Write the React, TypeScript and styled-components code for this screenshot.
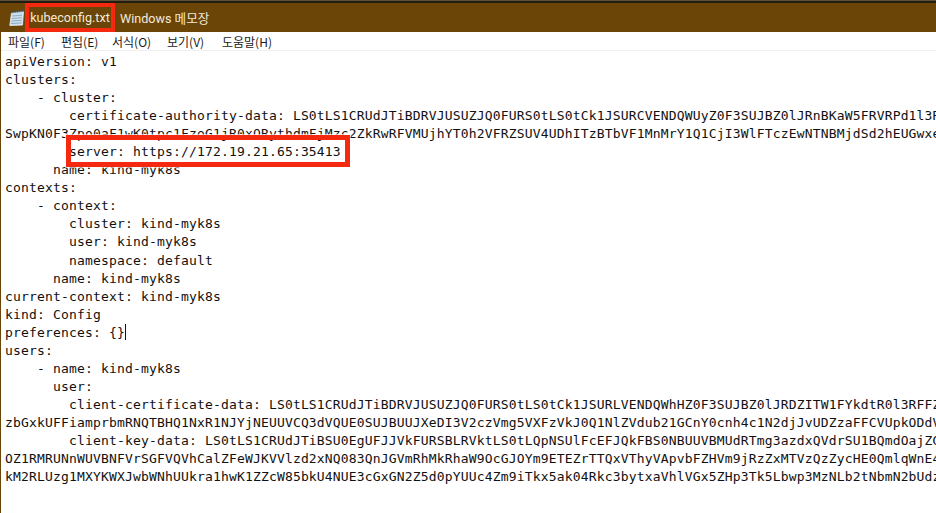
import React from "react";
import styled, { createGlobalStyle } from "styled-components";

const Global = createGlobalStyle`
  html, body { margin: 0; padding: 0; background: #fff; overflow: hidden; }
  #root { width: 936px; height: 513px; }
`;

const Win = styled.div`
  width: 936px;
  height: 513px;
  display: flex;
  flex-direction: column;
  overflow: hidden;
  background: #fff;
`;
const TopStrip = styled.div`
  height: 3px;
  flex: none;
  box-sizing: border-box;
  background: #231c10;
  border-top: 1px solid #5f5238;
`;
const TitleBar = styled.div`
  height: 29px;
  flex: none;
  display: flex;
  align-items: center;
  background: #6b4407;
  color: #f3ead9;
  font: 12.6px Roboto, "Noto Sans CJK KR", sans-serif;
  padding-left: 9px;
`;
const AppIcon = styled.svg`
  width: 16px;
  height: 18px;
  flex: none;
`;
const FileName = styled.span`
  border: 4px solid #f5290f;
  box-sizing: border-box;
  height: 29px;
  width: 90px;
  display: flex;
  align-items: center;
  justify-content: center;
  white-space: nowrap;
`;
const AppName = styled.span`
  margin-left: 5px;
  white-space: nowrap;
`;
const Body = styled.div`
  flex: 1;
  min-height: 0;
  display: flex;
  flex-direction: column;
  border-left: 1px solid #6b4407;
`;
const MenuBar = styled.div`
  height: 18px;
  flex: none;
  display: flex;
  align-items: center;
  background: #fff;
  border-bottom: 1px solid #f0f0f0;
  font: 12px "Noto Sans CJK KR", "Noto Sans", sans-serif;
  color: #1a1a1a;
`;
const MenuItem = styled.span<{ $w: number }>`
  width: ${(p) => p.$w}px;
  flex: none;
  padding-left: 7px;
  box-sizing: border-box;
  white-space: nowrap;
`;
const Editor = styled.div`
  position: relative;
  flex: 1;
  min-height: 0;
  overflow: hidden;
  padding: 2px 0 0 4px;
  font: 13px/18.05px "DejaVu Sans Mono", monospace;
  letter-spacing: 0.17px;
  color: #111;
`;
const Line = styled.div`
  white-space: pre;
`;
const Caret = styled.span`
  display: inline-block;
  width: 1px;
  height: 16px;
  background: #111;
  vertical-align: -3px;
`;
const Highlight = styled.div`
  position: absolute;
  left: 65px;
  top: 84px;
  width: 284px;
  height: 32px;
  box-sizing: border-box;
  border: 5px solid #f5290f;
  box-shadow: 0 0 0 1px rgba(255, 255, 255, 0.6);
`;

const menu: [string, number][] = [
  ["파일(F)", 53],
  ["편집(E)", 51],
  ["서식(O)", 55],
  ["보기(V)", 55],
  ["도움말(H)", 70],
];

const lines = [
  "apiVersion: v1",
  "clusters:",
  "    - cluster:",
  "        certificate-authority-data: LS0tLS1CRUdJTiBDRVJUSUZJQ0FURS0tLS0tCk1JSURCVENDQWUyZ0F3SUJBZ0lJRnBKaW5FRVRPd1l3RFFZSktvWklodmNOQVFF",
  "SwpKN0F3Zpo0aF1wK0tpc1FzoG1jR0xQRythdmFjMzc2ZkRwRFVMUjhYT0h2VFRZSUV4UDhITzBTbVF1MnMrY1Q1CjI3WlFTczEwNTNBMjdSd2hEUGwxeHJ",
  "        server: https://172.19.21.65:35413",
  "      name: kind-myk8s",
  "contexts:",
  "    - context:",
  "        cluster: kind-myk8s",
  "        user: kind-myk8s",
  "        namespace: default",
  "      name: kind-myk8s",
  "current-context: kind-myk8s",
  "kind: Config",
  "preferences: {}",
  "users:",
  "    - name: kind-myk8s",
  "      user:",
  "        client-certificate-data: LS0tLS1CRUdJTiBDRVJUSUZJQ0FURS0tLS0tCk1JSURLVENDQWhHZ0F3SUJBZ0lJRDZITW1FYkdtR0l3RFFZSktvWklodmNOQVFF",
  "zbGxkUFFiamprbmRNQTBHQ1NxR1NJYjNEUUVCQ3dVQUE0SUJBUUJXeDI3V2czVmg5VXFzVkJ0Q1NlZVdub21GCnY0cnh4c1N2djJvUDZzaFFCVUpkODdVcHJ",
  "        client-key-data: LS0tLS1CRUdJTiBSU0EgUFJJVkFURSBLRVktLS0tLQpNSUlFcEFJQkFBS0NBUUVBMUdRTmg3azdxQVdrSU1BQmdOajZGQm5rT3B",
  "OZ1RMRUNnWUVBNFVrSGFVQVhCalZFeWJKVVlzd2xNQ083QnJGVmRhMkRhaW9OcGJOYm9ETEZrTTQxVThyVApvbFZHVm9jRzZxMTVzQzZycHE0QmlqWnE4Rk",
  "kM2RLUzg1MXYKWXJwbWNhUUkra1hwK1ZZcW85bkU4NUE3cGxGN2Z5d0pYUUc4Zm9iTkx5ak04Rkc3bytxaVhlVGx5ZHp3Tk5Lbwp3MzNLb2tNbmN2bUdzVk",
];

export default function App() {
  return (
    <Win>
      <Global />
      <TopStrip />
      <TitleBar>
        <AppIcon viewBox="0 0 16 18">
          <path d="M2.5 4 L14.5 2.5 L13.5 16 L0.8 16.5 Z" fill="#c9dff0" stroke="#eef3f6" strokeWidth="0.8" />
          <path d="M3 7 L13 6.2 M2.7 9.5 L12.8 8.8 M2.4 12 L12.6 11.4 M2 14.5 L12.5 14" stroke="#8fa9bc" strokeWidth="0.9" />
          <path d="M2.5 3.5 L14.5 2" stroke="#2f6288" strokeWidth="1.6" strokeDasharray="1.2 0.6" />
        </AppIcon>
        <FileName>kubeconfig.txt</FileName>
        <AppName>Windows 메모장</AppName>
      </TitleBar>
      <Body>
        <MenuBar>
          {menu.map(([t, w]) => (
            <MenuItem key={t} $w={w}>
              {t}
            </MenuItem>
          ))}
        </MenuBar>
        <Editor>
          {lines.map((l, i) => (
            <Line key={i}>
              {l}
              {l === "preferences: {}" && <Caret />}
            </Line>
          ))}
          <Highlight />
        </Editor>
      </Body>
    </Win>
  );
}
